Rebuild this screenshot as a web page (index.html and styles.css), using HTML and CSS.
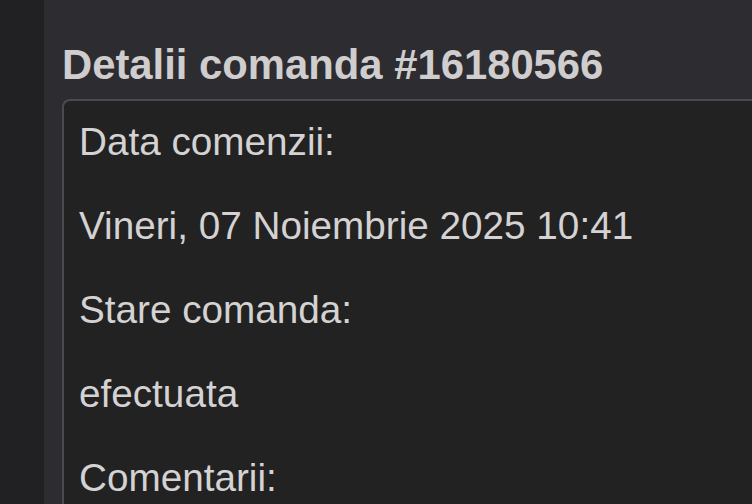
FILE: index.html
```html
<!DOCTYPE html>
<html lang="ro">
<head>
<meta charset="utf-8">
<title>Detalii comanda</title>
<link rel="stylesheet" href="styles.css">
</head>
<body>
<div class="layout">
  <aside class="rail"></aside>
  <main class="main">
    <h2 class="title">Detalii comanda #16180566</h2>
    <section class="card">
      <p class="row">Data comenzii:</p>
      <p class="row">Vineri, 07 Noiembrie 2025 10:41</p>
      <p class="row">Stare comanda:</p>
      <p class="row">efectuata</p>
      <p class="row">Comentarii:</p>
    </section>
  </main>
</div>
</body>
</html>
```
FILE: styles.css
```css
html, body {
  margin: 0;
  padding: 0;
  height: 100%;
  overflow: hidden;
  background: #2d2c31;
}
.layout {
  display: flex;
  height: 100%;
  font-family: "Liberation Sans", Arial, sans-serif;
}
.rail {
  width: 44px;
  flex: none;
  background: #212123;
}
.main {
  flex: 1;
  background: #2d2c31;
  padding: 41px 0 0 18px;
  min-width: 0;
  overflow: hidden;
}
.title {
  margin: 0 0 10px 0;
  font-size: 41.8px;
  font-weight: bold;
  color: #cfcdcd;
  line-height: 48px;
  white-space: nowrap;
}
.card {
  background: #222222;
  border: 2px solid #4b4a4f;
  border-right: none;
  border-bottom: none;
  border-radius: 8px 0 0 0;
  padding: 18px 0 0 15px;
  height: 420px;
}
.row {
  margin: 0 0 39px 0;
  font-size: 38.7px;
  line-height: 45px;
  color: #d4d2d2;
  white-space: nowrap;
}
```
